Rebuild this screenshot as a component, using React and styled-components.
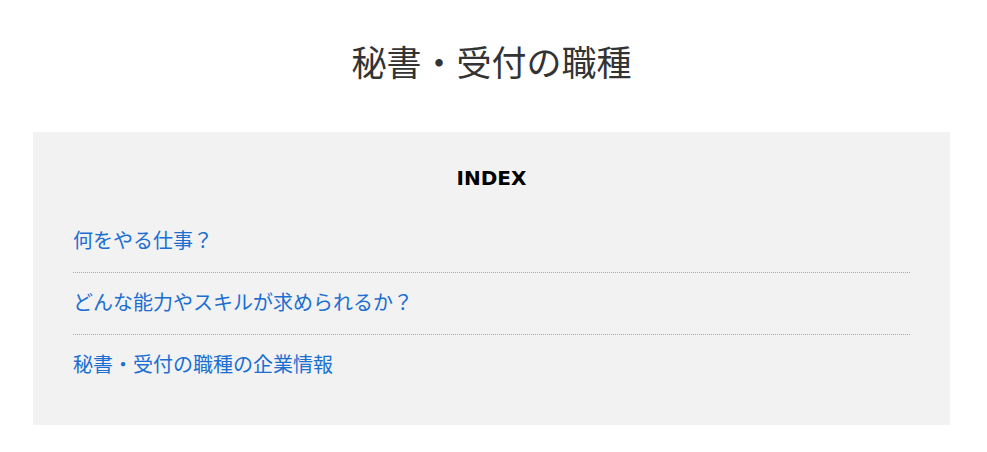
import styled, { createGlobalStyle } from "styled-components";

const GlobalStyle = createGlobalStyle`
  body {
    margin: 0;
    background: #fff;
    font-family: "DejaVu Sans", "Noto Sans CJK JP", sans-serif;
    color: #333;
  }
`;

const Page = styled.div`
  padding: 0 37px 0 33px;
`;

const Title = styled.h1`
  margin: 0;
  padding-top: 42px;
  height: 132px;
  box-sizing: border-box;
  text-align: center;
  font-size: 35px;
  font-weight: normal;
  line-height: 44px;
  color: #333;
`;

const IndexBox = styled.nav`
  background: #f2f2f2;
  padding: 30px 40px 29px;
`;

const IndexHeading = styled.h2`
  margin: 0 0 17px;
  text-align: center;
  font-size: 20px;
  line-height: 32px;
  font-weight: bold;
  color: #000;
`;

const IndexList = styled.ul`
  list-style: none;
  margin: 0;
  padding: 0;
`;

const IndexItem = styled.li`
  padding: 15px 0;
  border-bottom: ${(p) => (p.$last ? "none" : "1px dotted #aaa")};
`;

const IndexLink = styled.a`
  display: block;
  height: 31px;
  line-height: 31px;
  color: #1a6fd1;
  font-size: 20px;
  text-decoration: none;
`;

const items = [
  "何をやる仕事？",
  "どんな能力やスキルが求められるか？",
  "秘書・受付の職種の企業情報",
];

export default function App() {
  return (
    <>
      <GlobalStyle />
      <Page>
        <Title>秘書・受付の職種</Title>
        <IndexBox>
          <IndexHeading>INDEX</IndexHeading>
          <IndexList>
            {items.map((text, i) => (
              <IndexItem key={text} $last={i === items.length - 1}>
                <IndexLink href="#">{text}</IndexLink>
              </IndexItem>
            ))}
          </IndexList>
        </IndexBox>
      </Page>
    </>
  );
}
